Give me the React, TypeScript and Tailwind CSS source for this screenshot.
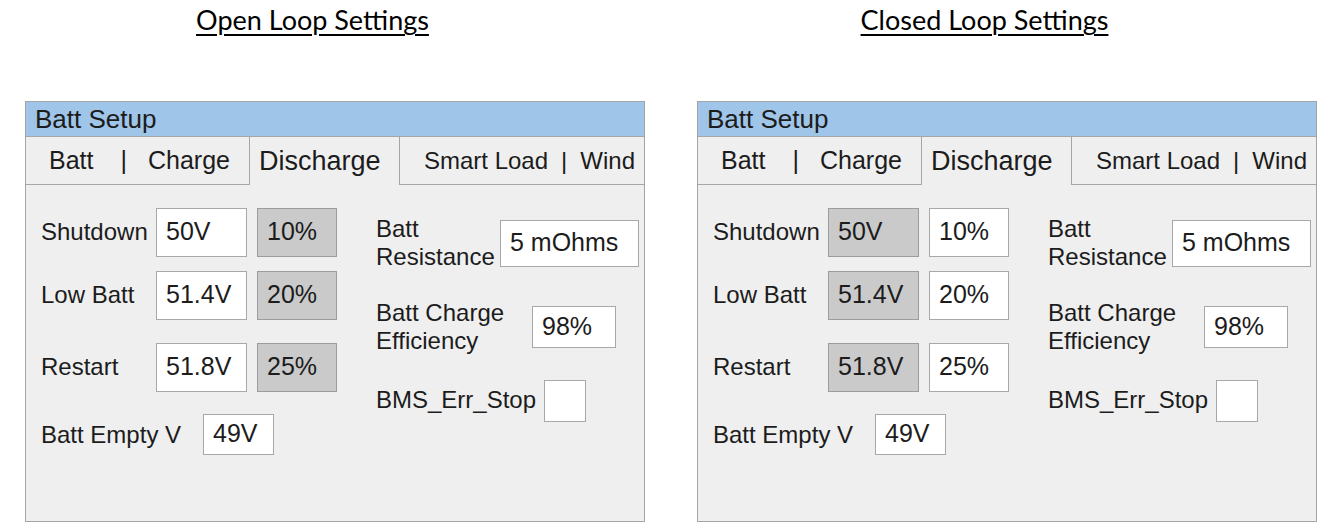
import React from "react";

const sans = { fontFamily: '"Liberation Sans", Arial, sans-serif' };

function Field({ value, gray, w, h }: { value: string; gray?: boolean; w: string; h: string }) {
  return (
    <div
      className={`${w} ${h} flex items-center pl-[9px] pb-[2px] text-[25px] leading-none border ${
        gray ? "bg-[#cacaca] border-[#9c9c9c]" : "bg-white border-[#a8a8a8]"
      }`}
    >
      {value}
    </div>
  );
}

function Panel({ closed }: { closed: boolean }) {
  const rows = [
    { label: "Shutdown", v: "50V", p: "10%", mt: "mt-[23px]" },
    { label: "Low Batt", v: "51.4V", p: "20%", mt: "mt-[14px]" },
    { label: "Restart", v: "51.8V", p: "25%", mt: "mt-[23px]" },
  ];
  return (
    <div className="w-full h-[421px] border border-[#a5a5a5] bg-[#efefef] flex flex-col text-[#1c1c1c]" style={sans}>
      <div className="h-[35px] bg-[#9fc5e8] border-b border-[#a5a5a5] flex items-center pl-[9px] text-[26px] leading-none">
        Batt Setup
      </div>
      <div className="h-[48px] flex">
        <div className="w-[224px] border-r border-b border-[#a5a5a5] flex items-center pl-[23px] text-[25px] leading-none">
          <span>Batt</span>
          <span className="ml-[27px]">|</span>
          <span className="ml-[21px]">Charge</span>
        </div>
        <div className="w-[149px] flex items-center pl-[9px] text-[27px] leading-none">Discharge</div>
        <div className="flex-1 border-l border-b border-[#a5a5a5] flex items-center pl-[24px] text-[24px] leading-none">
          <span>Smart Load</span>
          <span className="ml-[13px]">|</span>
          <span className="ml-[13px]">Wind</span>
        </div>
      </div>
      <div className="flex-1 flex pl-[15px]">
        <div className="w-[296px] flex flex-col">
          {rows.map((r) => (
            <div key={r.label} className={`flex items-center ${r.mt}`}>
              <div className="w-[115px] pb-[2px] text-[24px] leading-none">{r.label}</div>
              <Field value={r.v} gray={closed} w="w-[91px]" h="h-[49px]" />
              <div className="ml-[10px]">
                <Field value={r.p} gray={!closed} w="w-[80px]" h="h-[49px]" />
              </div>
            </div>
          ))}
          <div className="flex items-center mt-[22px]">
            <div className="w-[162px] text-[24px] leading-none">Batt Empty V</div>
            <Field value="49V" w="w-[71px]" h="h-[41px]" />
          </div>
        </div>
        <div className="ml-[39px] flex flex-col">
          <div className="flex items-center mt-[30px] h-[56px]">
            <div className="w-[124px] text-[24px] leading-[28px]">
              Batt
              <br />
              Resistance
            </div>
            <Field value="5 mOhms" w="w-[139px]" h="h-[47px]" />
          </div>
          <div className="flex items-center mt-[28px] h-[56px]">
            <div className="w-[156px] text-[24px] leading-[28px]">
              Batt Charge
              <br />
              Efficiency
            </div>
            <Field value="98%" w="w-[84px]" h="h-[42px]" />
          </div>
          <div className="flex items-center mt-[25px] h-[42px]">
            <div className="w-[168px] pb-[2px] text-[24px] leading-none">BMS_Err_Stop</div>
            <div className="w-[42px] h-[42px] bg-white border border-[#a8a8a8]" />
          </div>
        </div>
      </div>
    </div>
  );
}

function Column({ title, closed }: { title: string; closed: boolean }) {
  return (
    <div className="w-[620px] flex flex-col">
      <div className="h-[40px] w-full pr-[45px] text-center">
        <span
          className="text-[27px] leading-[40px] text-black underline decoration-[2px] underline-offset-[4px]"
          style={{ fontFamily: 'Lato, "Open Sans", sans-serif' }}
        >
          {title}
        </span>
      </div>
      <div className="mt-[61px]">
        <Panel closed={closed} />
      </div>
    </div>
  );
}

export default function App() {
  return (
    <div className="w-[1328px] h-[529px] bg-white flex pl-[25px] gap-[52px]">
      <Column title="Open Loop Settings" closed={false} />
      <Column title="Closed Loop Settings" closed={true} />
    </div>
  );
}
